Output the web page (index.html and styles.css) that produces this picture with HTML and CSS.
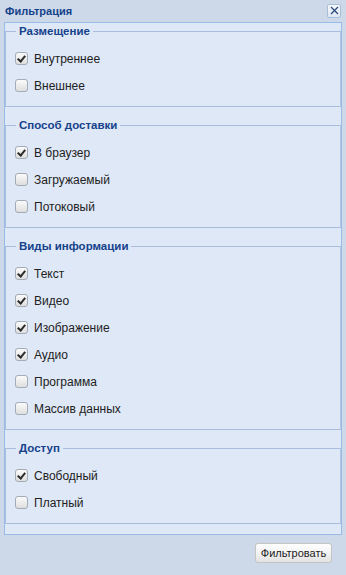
FILE: index.html
```html
<!DOCTYPE html>
<html>
<head>
    <meta charset="UTF-8">
    <meta name="viewport" content="width=device-width, initial-scale=1.0">
    <title>Фильтрация</title>
    <link rel="stylesheet" href="styles.css">
</head>
<body>
    <div class="window">
        <div class="window-header">
            <span class="window-title">Фильтрация</span>
            <span class="close-btn">
                <svg width="9" height="9" viewBox="0 0 9 9"><path d="M1 1 L8 8 M8 1 L1 8" stroke="#2a4a7a" stroke-width="1.3" fill="none"/></svg>
            </span>
        </div>

        <div class="window-body">
            <fieldset class="group">
                <legend>Размещение</legend>
                <label class="check-row"><span class="box checked"></span>Внутреннее</label>
                <label class="check-row"><span class="box"></span>Внешнее</label>
            </fieldset>

            <fieldset class="group">
                <legend>Способ доставки</legend>
                <label class="check-row"><span class="box checked"></span>В браузер</label>
                <label class="check-row"><span class="box"></span>Загружаемый</label>
                <label class="check-row"><span class="box"></span>Потоковый</label>
            </fieldset>

            <fieldset class="group">
                <legend>Виды информации</legend>
                <label class="check-row"><span class="box checked"></span>Текст</label>
                <label class="check-row"><span class="box checked"></span>Видео</label>
                <label class="check-row"><span class="box checked"></span>Изображение</label>
                <label class="check-row"><span class="box checked"></span>Аудио</label>
                <label class="check-row"><span class="box"></span>Программа</label>
                <label class="check-row"><span class="box"></span>Массив данных</label>
            </fieldset>

            <fieldset class="group">
                <legend>Доступ</legend>
                <label class="check-row"><span class="box checked"></span>Свободный</label>
                <label class="check-row"><span class="box"></span>Платный</label>
            </fieldset>
        </div>

        <div class="window-footer">
            <button class="btn">Фильтровать</button>
        </div>
    </div>
</body>
</html>
```

FILE: styles.css
```css
/* Окно фильтрации */
* {
    margin: 0;
    padding: 0;
    box-sizing: border-box;
}

body {
    font-family: "Liberation Sans", Arial, sans-serif;
    font-size: 12px;
    color: #000;
    background-color: #cdd9e8;
    width: 346px;
    height: 575px;
    overflow: hidden;
}

.window-header {
    height: 22px;
    display: flex;
    align-items: center;
    justify-content: space-between;
    padding: 0 5px 0 5px;
}

.window-title {
    font-size: 11px;
    font-weight: bold;
    color: #15428b;
}

.close-btn {
    width: 14px;
    height: 14px;
    margin-top: -1px;
    display: flex;
    align-items: center;
    justify-content: center;
    border: 1px solid #a9bfd9;
    border-radius: 2px;
    background: linear-gradient(#f4f8fc, #dde7f3);
}

.window-body {
    margin: 0 4px;
    border: 1px solid #99bbe8;
    background-color: #dfe8f6;
    padding: 1px 0 10px 0;
}

.group {
    border: 1px solid #a9bedd;
    padding: 7px 10px 7px 10px;
    margin-bottom: 11px;
    border-right-color: #b4c6e0;
}

.group:last-child {
    margin-bottom: 0;
}

.group legend {
    font-size: 11.5px;
    font-weight: bold;
    line-height: 14px;
    color: #15428b;
    padding: 0 3px;
}

.check-row {
    height: 27px;
    display: flex;
    align-items: center;
    margin-left: -1px;
    color: #222;
}

.box {
    width: 13px;
    height: 13px;
    margin-right: 6px;
    border: 1px solid #a3abb5;
    border-radius: 3px;
    background: linear-gradient(#fbfbfb, #dedede);
    position: relative;
}

.box.checked::after {
    content: "";
    position: absolute;
    left: 3px;
    top: 1px;
    width: 3px;
    height: 6px;
    border: solid #2b2b2b;
    border-width: 0 2px 2px 0;
    transform: rotate(40deg);
}

.window-footer {
    display: flex;
    justify-content: flex-end;
    padding: 8px 14px 0 0;
}

.btn {
    font-family: "Liberation Sans", Arial, sans-serif;
    font-size: 11px;
    color: #222;
    height: 20px;
    width: 77px;
    border: 1px solid #c4c4c4;
    border-radius: 3px;
    background: linear-gradient(#ffffff 0%, #f3f3f3 50%, #e2e2e2 100%);
}
```
